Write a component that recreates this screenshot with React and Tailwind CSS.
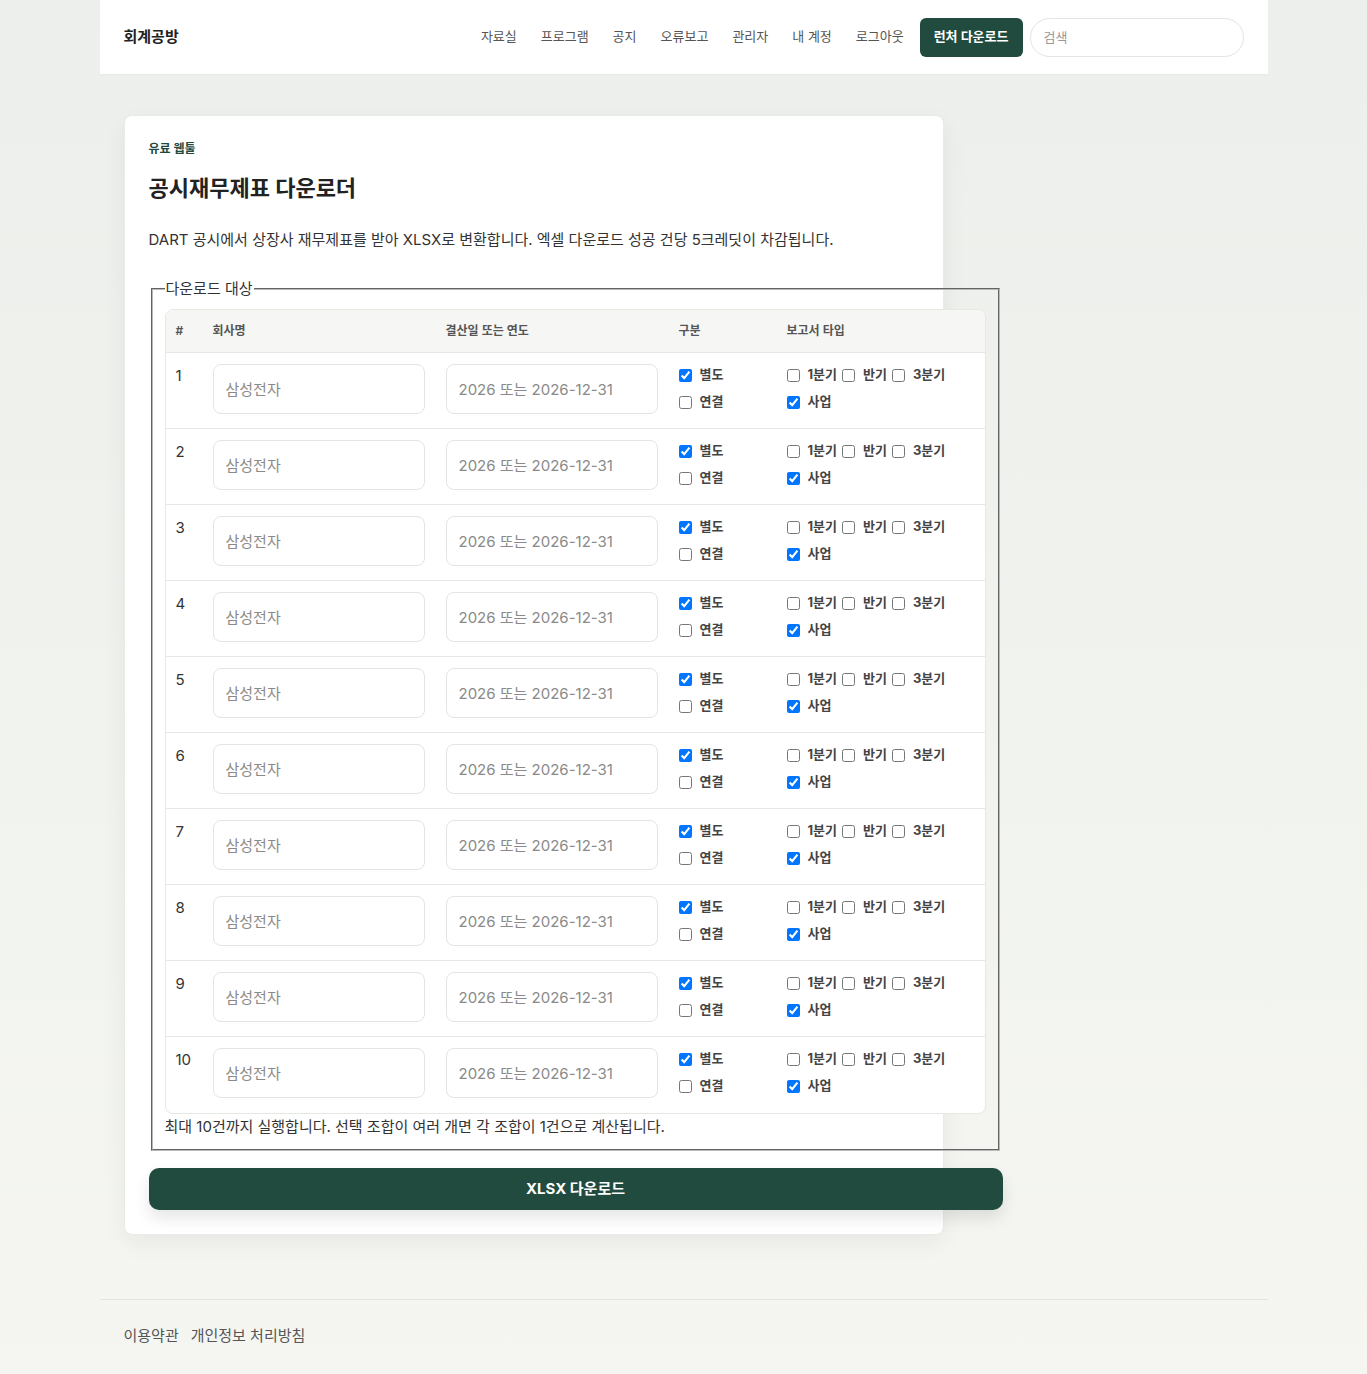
const rows = [1, 2, 3, 4, 5, 6, 7, 8, 9, 10];
const navItems = ["자료실", "프로그램", "공지", "오류보고", "관리자", "내 계정", "로그아웃"];

function Check({ label, checked }) {
  return (
    <label className="flex items-center gap-2 h-5 text-[13px] font-bold text-[#444]">
      <input type="checkbox" defaultChecked={checked} className="m-0 w-[13px] h-[13px] shrink-0" />
      <span>{label}</span>
    </label>
  );
}

function Row({ n, last }) {
  return (
    <div
      className={`grid grid-cols-[37px_233px_233px_108px_208px] h-[76px] ${
        last ? "h-[75px]" : "border-b border-[#e6e8e4]"
      }`}
    >
      <div className="pl-[10px] pt-[13px] text-[15px] text-[#333] leading-5">{n}</div>
      <div className="px-[10px] pt-[11px]">
        <input
          placeholder="삼성전자"
          className="w-[212px] h-[50px] px-3 border border-[#e3e5e1] rounded-lg text-[15px] bg-white placeholder:text-[#8a8a8a] outline-none"
        />
      </div>
      <div className="px-[10px] pt-[11px]">
        <input
          placeholder="2026 또는 2026-12-31"
          className="w-[212px] h-[50px] px-3 border border-[#e3e5e1] rounded-lg text-[15px] bg-white placeholder:text-[#8a8a8a] outline-none"
        />
      </div>
      <div className="px-[10px] pt-[12px] flex flex-col gap-[7px]">
        <Check label="별도" checked />
        <Check label="연결" />
      </div>
      <div className="px-[10px] pt-[12px] flex flex-wrap content-start gap-x-[5px] gap-y-[7px]">
        <Check label="1분기" />
        <Check label="반기" />
        <Check label="3분기" />
        <Check label="사업" checked />
      </div>
    </div>
  );
}

export default function App() {
  return (
    <div
      className="min-h-screen bg-linear-to-b from-[#ecefeb] to-[#f5f6f2] text-[#222]"
      style={{ fontFamily: 'Inter, "Noto Sans CJK KR", "Noto Sans", sans-serif' }}
    >
      <div className="w-[1168px] mx-auto">
        <header className="h-[75px] bg-white border-b border-[#e6e9e4] flex items-center justify-between px-6">
          <div className="text-[15px] font-bold text-[#222]">회계공방</div>
          <nav className="flex items-center">
            {navItems.map((item) => (
              <a key={item} className="px-3 text-[13px] text-[#555]">
                {item}
              </a>
            ))}
            <button className="ml-1 h-[39px] px-[14px] rounded-md bg-[#214b3f] text-white text-[13px] font-bold">
              런처 다운로드
            </button>
            <input
              placeholder="검색"
              className="ml-[7px] w-[214px] h-[39px] rounded-full border border-[#e3e5e1] pl-[13px] text-[13px] placeholder:text-[#999] outline-none"
            />
          </nav>
        </header>

        <main className="pt-10 px-6">
          <div className="w-[820px] bg-white border border-[#e8ebe6] rounded-lg shadow-[0_8px_24px_rgba(30,40,30,0.06)] px-6 pt-[25px] pb-6">
            <div className="text-[12px] font-bold text-[#1f4a3d] leading-4">유료 웹툴</div>
            <h1 className="mt-[16px] text-[22px] font-bold leading-[30px] text-[#222]">공시재무제표 다운로더</h1>
            <p className="mt-[26px] text-[15px] leading-[22px] text-[#333]">
              DART 공시에서 상장사 재무제표를 받아 XLSX로 변환합니다. 엑셀 다운로드 성공 건당 5크레딧이 차감됩니다.
            </p>

            <fieldset className="mt-[28px] ml-[2px] w-[849px] border-2 border-[#b8b8b8] [border-style:groove] px-3 pt-[10px] pb-3">
              <legend className="px-[1px] text-[15px] leading-5 text-[#333]">다운로드 대상</legend>
              <div className="w-[821px] border border-[#e6e8e4] rounded-lg overflow-hidden bg-white">
                <div className="grid grid-cols-[37px_233px_233px_108px_208px] h-[43px] items-center bg-[#f6f7f5] border-b border-[#e6e8e4] text-[12px] font-semibold text-[#555]">
                  <div className="pl-[10px]">#</div>
                  <div className="pl-[10px]">회사명</div>
                  <div className="pl-[10px]">결산일 또는 연도</div>
                  <div className="pl-[10px]">구분</div>
                  <div className="pl-[10px]">보고서 타입</div>
                </div>
                {rows.map((n) => (
                  <Row key={n} n={n} last={n === 10} />
                ))}
              </div>
              <p className="mt-[3px] text-[15px] leading-5 text-[#333]">
                최대 10건까지 실행합니다. 선택 조합이 여러 개면 각 조합이 1건으로 계산됩니다.
              </p>
            </fieldset>

            <button className="mt-[17px] w-[854px] h-[42px] rounded-[10px] bg-[#214b3f] text-white text-[15px] font-bold shadow-[0_8px_16px_rgba(0,0,0,0.1)]">
              XLSX 다운로드
            </button>
          </div>
        </main>

        <footer className="mt-[64px] border-t border-[#e3e5e1] px-6 pt-[26px] pb-[28px] flex gap-3 text-[15px] leading-5 text-[#555]">
          <a>이용약관</a>
          <a>개인정보 처리방침</a>
        </footer>
      </div>
    </div>
  );
}
